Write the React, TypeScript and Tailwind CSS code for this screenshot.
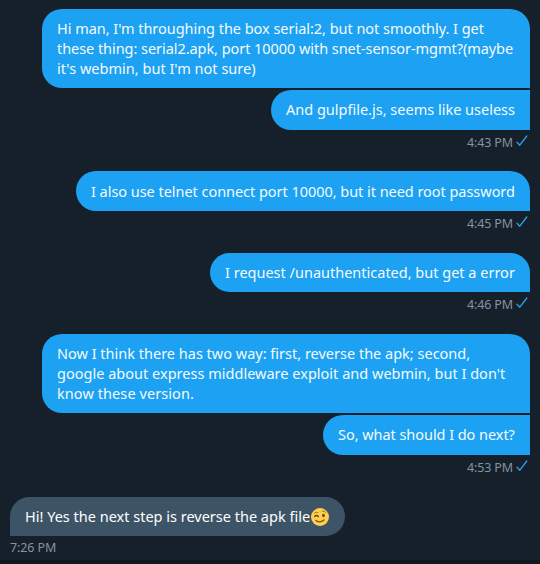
import React from "react";

type Line = { text: string; cls: string };

function Bubble({ lines, cls }: { lines: Line[]; cls: string }) {
  return (
    <div className={`shrink-0 px-[15px] pt-[10.3px] pb-[9.6px] text-[14.5px] leading-[19.7px] ${cls}`}>
      {lines.map((l) => (
        <div key={l.text} className="h-[19.7px] whitespace-nowrap">
          <span className={l.cls}>{l.text}</span>
        </div>
      ))}
    </div>
  );
}

const sent = "bg-[#1da1f2] text-[#f4fbff] rounded-l-[20px]";

function Check() {
  return (
    <svg className="mt-px" width="12" height="12" viewBox="0 0 12 12" fill="none" stroke="#2ba2ec" strokeWidth="1.3" strokeLinecap="round" strokeLinejoin="round">
      <path d="M1 7.2 3.8 10.2 10.8 1" />
    </svg>
  );
}

function Time({ children }: { children: string }) {
  return (
    <div className="flex h-[41.8px] shrink-0 items-start justify-end gap-[3px] pt-[4px] pr-[2px] text-[12.5px] leading-[17px] text-[#8494a1]">
      <span className="tracking-[-0.12px]">{children}</span>
      <Check />
    </div>
  );
}

export default function App() {
  return (
    <main className="flex h-[564px] w-[540px] flex-col items-end overflow-hidden border-b-[4px] border-[#14171f] bg-[#15202b] px-[10px] pt-[9px] font-['Noto_Sans',sans-serif]">
      <Bubble
        cls={`${sent} w-[488px] rounded-tr-[20px]`}
        lines={[
          { text: "Hi man, I'm throughing the box serial:2, but not smoothly. I get", cls: "tracking-[-0.035px]" },
          { text: "these thing: serial2.apk, port 10000 with snet-sensor-mgmt?(maybe", cls: "tracking-[-0.055px]" },
          { text: "it's webmin, but I'm not sure)", cls: "tracking-[0.02px]" },
        ]}
      />
      <div className="h-[2px] shrink-0" />
      <Bubble cls={`${sent} w-[259px]`} lines={[{ text: "And gulpfile.js, seems like useless", cls: "" }]} />
      <Time>4:43 PM</Time>
      <Bubble cls={`${sent} w-[454px] rounded-tr-[20px]`} lines={[{ text: "I also use telnet connect port 10000, but it need root password", cls: "tracking-[-0.04px]" }]} />
      <Time>4:45 PM</Time>
      <Bubble cls={`${sent} w-[320px] rounded-tr-[20px]`} lines={[{ text: "I request /unauthenticated, but get a error", cls: "" }]} />
      <Time>4:46 PM</Time>
      <Bubble
        cls={`${sent} w-[488px] rounded-tr-[20px]`}
        lines={[
          { text: "Now I think there has two way: first, reverse the apk; second,", cls: "" },
          { text: "google about express middleware exploit and webmin, but I don't", cls: "tracking-[0.015px]" },
          { text: "know these version.", cls: "tracking-[0.08px]" },
        ]}
      />
      <div className="h-[2px] shrink-0" />
      <Bubble cls={`${sent} w-[207px]`} lines={[{ text: "So, what should I do next?", cls: "tracking-[-0.05px]" }]} />
      <Time>4:53 PM</Time>
      <div className="mt-[0.6px] flex h-[39px] w-[335px] shrink-0 items-center self-start rounded-t-[20px] rounded-br-[20px] bg-[#3d5466] pl-[15px] text-[14.5px] text-white">
        <span className="w-[286px] whitespace-nowrap">Hi! Yes the next step is reverse the apk file</span>
        <svg width="18" height="18" viewBox="0 0 36 36">
          <circle cx="18" cy="18" r="18" fill="#ffcf50" />
          <path d="M7 10q3-3 7-1M22 6q5-1 8 3" fill="none" stroke="#a06f20" strokeWidth="1.8" strokeLinecap="round" />
          <path d="M7 17q4-4 8 0" fill="none" stroke="#664500" strokeWidth="2.4" strokeLinecap="round" />
          <ellipse cx="25" cy="15" rx="2.6" ry="3.4" fill="#664500" />
          <path d="M10 25q8 6 16-1" fill="none" stroke="#7a4c0c" strokeWidth="2.6" strokeLinecap="round" />
        </svg>
      </div>
      <div className="shrink-0 self-start pt-[3.4px] text-[12.5px] leading-[17px] tracking-[-0.1px] text-[#8494a1]">7:26 PM</div>
    </main>
  );
}
